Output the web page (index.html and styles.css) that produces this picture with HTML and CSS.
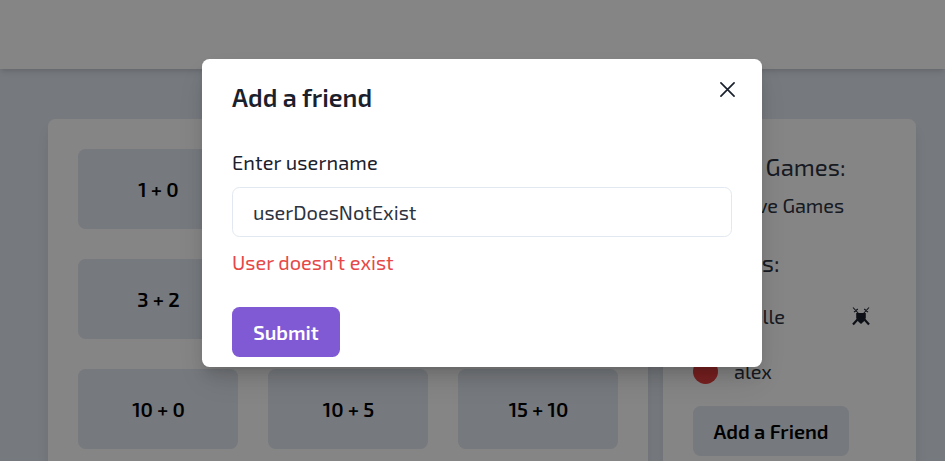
FILE: index.html
```html
<!DOCTYPE html>
<html lang="en">
<head>
<meta charset="utf-8">
<title>Add a friend</title>
<link rel="stylesheet" href="styles.css">
</head>
<body>
<div class="page">
  <header class="navbar"></header>
  <main class="lobby">
    <section class="card modes">
      <button class="tile">1 + 0</button>
      <button class="tile">2 + 1</button>
      <button class="tile">3 + 0</button>
      <button class="tile">3 + 2</button>
      <button class="tile">5 + 0</button>
      <button class="tile">5 + 3</button>
      <button class="tile">10 + 0</button>
      <button class="tile">10 + 5</button>
      <button class="tile">15 + 10</button>
    </section>
    <aside class="card social">
      <h2 class="heading">Active Games:</h2>
      <p class="empty">No Active Games</p>
      <h2 class="heading friends-heading">Friends:</h2>
      <div class="friend">
        <i class="status online"></i><span class="name">Joelle</span>
        <svg class="challenge" viewBox="0 0 20 20">
          <g fill="none" stroke="currentColor">
            <path stroke-width="1.1" d="M2 1.5L8 8M18 1.5L12 8M3 6.2L6.8 3M17 6.2L13.2 3"/>
            <path stroke-width="2.2" d="M2 18.500L6.500 13.500M18 18.500L13.500 13.500"/>
          </g>
          <path fill="currentColor" d="M5.200 7H14.800V12Q13.800 15.800 10 18Q6.200 15.800 5.200 12Z"/>
        </svg>
      </div>
      <div class="friend">
        <i class="status offline"></i><span class="name">alex</span>
      </div>
      <button class="add">Add a Friend</button>
    </aside>
  </main>
</div>
<div class="overlay">
  <section class="modal" role="dialog">
    <header class="modal-header">
      <h1 class="title">Add a friend</h1>
      <button class="close" aria-label="Close">
        <svg viewBox="0 0 16 16"><path d="M1 1L15 15M15 1L1 15" fill="none" stroke="currentColor" stroke-width="1.8" stroke-linecap="round"/></svg>
      </button>
    </header>
    <label class="label" for="username">Enter username</label>
    <input class="input" id="username" value="userDoesNotExist">
    <p class="error">User doesn't exist</p>
    <button class="submit">Submit</button>
  </section>
</div>
</body>
</html>
```
FILE: styles.css
```css
* { box-sizing: border-box; margin: 0; }
html { font-size: 20px; }
body {
  height: 461px;
  overflow: hidden;
  font: 400 20px/30px "Exo 2", Roboto, "Noto Sans", sans-serif;
  color: #1a202c;
}
button, input { font: inherit; color: inherit; letter-spacing: inherit; border: 0; padding: 0; }
.page { height: 461px; overflow: hidden; background: #e2e8f0; }
.navbar {
  height: 69px;
  background: #fff;
  box-shadow: 0 4px 6px -1px rgba(0,0,0,.1), 0 2px 4px -1px rgba(0,0,0,.06);
}
.lobby { display: flex; gap: 15px; padding: 50px 29px 0 48px; }
.card {
  height: 450px;
  padding: 30px;
  background: #fff;
  border-radius: 7.5px;
  box-shadow: 0 10px 15px -3px rgba(0,0,0,.1), 0 4px 6px -2px rgba(0,0,0,.05);
}
.modes {
  width: 600px;
  display: grid;
  grid-template-columns: repeat(3, 160px);
  grid-auto-rows: 80px;
  gap: 30px;
}
.tile, .add { background: #e2e8f0; border-radius: 7.5px; color: #000; font-weight: 600; }
.tile { padding-left: 1px; }
.social { width: 253px; padding-top: 29px; white-space: nowrap; color: #2d3340; }
.heading { font-weight: 400; font-size: 24px; line-height: 38px; }
.empty { line-height: 38px; letter-spacing: -.05px; }
.friends-heading { margin-top: 20px; }
.friend { display: flex; align-items: center; height: 40px; margin-top: 15px; }
.friends-heading + .friend { margin-top: 14px; }
.status { width: 25px; height: 25px; border-radius: 50%; margin-right: 16px; }
.name { letter-spacing: -.1px; }
.online { background: #38a169; }
.offline { background: #e53e3e; }
.challenge { width: 20px; height: 20px; margin-left: auto; margin-right: 15px; color: #1a202c; }
.add { display: block; width: 156px; height: 50px; margin-top: 15px; }
.overlay {
  position: absolute;
  inset: 0;
  display: flex;
  align-items: flex-start;
  padding: 59px 0 0 202px;
  background: rgba(0,0,0,.48);
}
.modal {
  width: 560px;
  height: 308px;
  padding: 19px 30px 10px;
  background: #fff;
  border-radius: 7.5px;
  box-shadow: 0 10px 15px -3px rgba(0,0,0,.1), 0 4px 6px -2px rgba(0,0,0,.05), 0 15px 30px -5px rgba(0,0,0,.12);
}
.modal-header { display: flex; justify-content: space-between; height: 69px; }
.title { font-size: 25px; line-height: 38px; font-weight: 600; }
.close { width: 40px; height: 40px; margin: -9px -15px 0 0; background: none; display: grid; place-items: center; }
.close svg { width: 15px; height: 15px; }
.label { display: block; height: 40px; letter-spacing: .1px; }
.input {
  display: block;
  width: 500px;
  height: 50px;
  padding: 0 20px;
  border: 1px solid #e2e8f0;
  border-radius: 7.5px;
  background: #fff;
  color: #2d3340;
}
.error { margin-top: 10px; color: #e64848; }
.submit {
  display: block;
  width: 108px;
  height: 50px;
  margin-top: 30px;
  border-radius: 7.5px;
  background: #805ad5;
  color: #fff;
  font-weight: 600;
}
```
